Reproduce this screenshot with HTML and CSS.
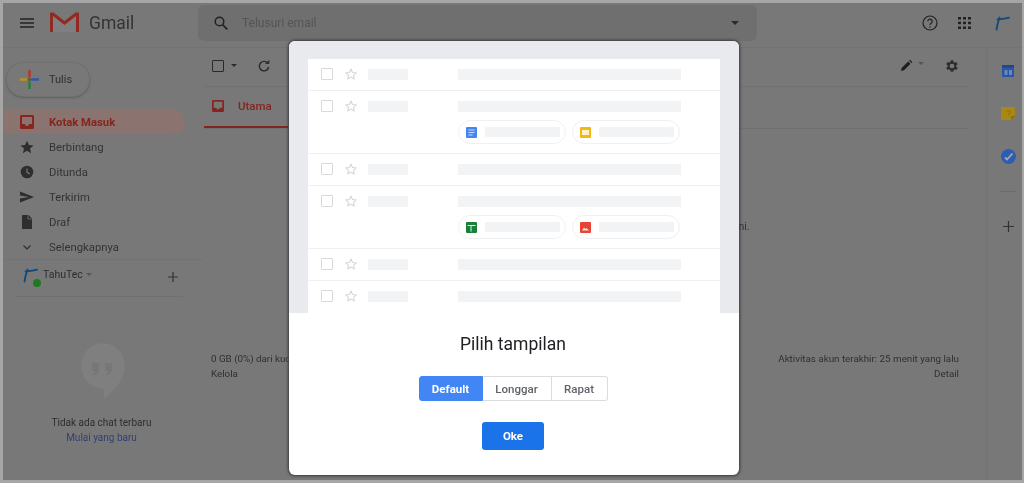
FILE: index.html
```html
<!DOCTYPE html>
<html lang="id">
<head>
<meta charset="utf-8">
<title>Gmail</title>
<link rel="stylesheet" href="styles.css">
</head>
<body>
<svg class="defs" width="0" height="0" aria-hidden="true">
  <symbol id="star" viewBox="0 0 24 24"><path d="M12 3.500l2.600 5.900 6.400.6-4.800 4.300 1.400 6.300L12 17.400l-5.600 3.200 1.400-6.300L3 10l6.400-.6z" fill="none" stroke="currentColor" stroke-width="1.800" stroke-linejoin="round"/></symbol>
  <symbol id="inbox" viewBox="0 0 14 14"><path fill-rule="evenodd" d="M1.500 0h11A1.500 1.500 0 0 1 14 1.500v11a1.500 1.500 0 0 1-1.500 1.500h-11A1.500 1.500 0 0 1 0 12.500v-11A1.500 1.500 0 0 1 1.500 0zM2 2v7h3a2 2 0 0 0 4 0h3V2z" fill="currentColor"/></symbol>
  <symbol id="tlogo" viewBox="0 0 16 16"><path d="M2.500 14.500C3 11 4 7 5.500 2.500M3.500 4.500C7 4.200 11 4 15 2.600" fill="none" stroke="#0f4a7c" stroke-width="1.800" stroke-linecap="round"/></symbol>
</svg>
<div class="frame">
  <header class="topbar">
    <div class="brand">
      <svg class="menu" viewBox="0 0 14 10"><path d="M0 1h14M0 5h14M0 9h14" stroke="#222" stroke-width="1.300"/></svg>
      <svg class="mlogo" viewBox="0 0 29 21"><path d="M2 3l12.500 9.500L27 3v17H2z" fill="#7f7f7f"/><path d="M1.500 20V2h1.500L14.500 11 26 2h1.500v18" fill="none" stroke="#912a22" stroke-width="3"/></svg>
      <span class="wordmark">Gmail</span>
    </div>
    <div class="search">
      <svg class="search-icon" viewBox="0 0 14 14"><circle cx="5.500" cy="5.500" r="4.300" fill="none" stroke="#222" stroke-width="1.500"/><path d="M8.800 8.800L13.300 13.300" stroke="#222" stroke-width="1.700"/></svg>
      <span class="search-text">Telusuri email</span>
      <span class="caret search-caret"></span>
    </div>
    <div class="actions">
      <svg class="help" viewBox="0 0 16 16"><circle cx="8" cy="8" r="7" fill="none" stroke="#222" stroke-width="1.200"/><path d="M5.800 6.300a2.200 2.200 0 1 1 3.500 1.800c-.8.600-1.300 1-1.300 2" fill="none" stroke="#222" stroke-width="1.200"/><circle cx="8" cy="12" r=".8" fill="#222"/></svg>
      <svg class="apps" viewBox="0 0 13 12"><g fill="#222"><rect x="0" width="3" height="2.500"/><rect x="5" width="3" height="2.500"/><rect x="10" width="3" height="2.500"/><rect x="0" y="4.700" width="3" height="2.500"/><rect x="5" y="4.700" width="3" height="2.500"/><rect x="10" y="4.700" width="3" height="2.500"/><rect x="0" y="9.500" width="3" height="2.500"/><rect x="5" y="9.500" width="3" height="2.500"/><rect x="10" y="9.500" width="3" height="2.500"/></g></svg>
      <svg class="top-t"><use href="#tlogo"/></svg>
    </div>
  </header>

  <div class="main">
    <aside class="sidebar">
      <button class="compose" type="button">
        <svg class="plus-color" viewBox="0 0 20 20"><path d="M10 0v8" stroke="#b5382c" stroke-width="2.600"/><path d="M10 12v8" stroke="#2a7d3c" stroke-width="2.600"/><path d="M0 10h8" stroke="#b89222" stroke-width="2.600"/><path d="M12 10h8" stroke="#2a5aa8" stroke-width="2.600"/><path d="M8 10h4" stroke="#5a5a40" stroke-width="2.600"/></svg>
        <span>Tulis</span>
      </button>
      <nav class="nav">
        <a class="nav-item active"><svg class="nav-icon"><use href="#inbox"/></svg>Kotak Masuk</a>
        <a class="nav-item"><svg class="nav-icon" viewBox="0 0 14 14"><path d="M7 .8l1.900 4.300 4.700.4-3.600 3.100 1.100 4.600L7 10.800l-4.100 2.400L4 8.600.4 5.500l4.700-.4z" fill="#2e2e2e"/></svg>Berbintang</a>
        <a class="nav-item"><svg class="nav-icon" viewBox="0 0 14 14"><circle cx="7" cy="7" r="6.300" fill="#2e2e2e"/><path d="M7 3.500V7.300l2.800 1.600" fill="none" stroke="#787878" stroke-width="1.200"/></svg>Ditunda</a>
        <a class="nav-item"><svg class="nav-icon" viewBox="0 0 14 14"><path d="M0 1.500L14 7 0 12.500V8.500L9 7 0 5.500z" fill="#2e2e2e"/></svg>Terkirim</a>
        <a class="nav-item"><svg class="nav-icon" viewBox="0 0 14 14"><path d="M2 0h6.500L12 3.500V14H2z" fill="#2e2e2e"/><path d="M8 .5V4h3.500" fill="none" stroke="#787878" stroke-width=".8"/></svg>Draf</a>
        <a class="nav-item"><svg class="nav-icon" viewBox="0 0 14 14"><path d="M3.500 5.500L7 9l3.500-3.500" fill="none" stroke="#2e2e2e" stroke-width="1.200"/></svg>Selengkapnya</a>
      </nav>
      <div class="account">
        <span class="avatar"><svg class="avatar-t"><use href="#tlogo"/></svg><i class="dot"></i></span>
        <span class="account-name">TahuTec</span>
        <span class="caret account-caret"></span>
        <svg class="account-plus" viewBox="0 0 10 10"><path d="M5 0v10M0 5h10" stroke="#333" stroke-width="1.200"/></svg>
      </div>
      <div class="hangouts">
        <svg class="bubble" viewBox="0 0 46 57"><path d="M23 0a23 23 0 0 1 23 23c0 13-11 25-21 33v-10.100A23 23 0 0 1 23 0z" fill="#7f7f7f"/><path d="M13 20h7v8l-3 4h-3l2-4h-3zM26 20h7v8l-3 4h-3l2-4h-3z" fill="#777"/></svg>
        <p class="hang-line">Tidak ada chat terbaru</p>
        <a class="hang-link">Mulai yang baru</a>
      </div>
    </aside>

    <section class="content">
      <div class="toolbar">
        <span class="tool-check"></span>
        <span class="caret tool-caret"></span>
        <svg class="refresh" viewBox="0 0 12 12"><path d="M10 3.500A4.700 4.700 0 1 0 10.700 7" fill="none" stroke="#2a2a2a" stroke-width="1.400"/><path d="M7 3.800h4.300V0z" fill="#2a2a2a"/></svg>
        <span class="tool-right">
          <svg class="pencil" viewBox="0 0 14 14"><path d="M1 13l.8-3.300 7-7 2.500 2.500-7 7zM9.800 1.700l1-1 2.500 2.500-1 1z" fill="#1e1e1e"/></svg>
          <span class="caret pencil-caret"></span>
          <svg class="gear" viewBox="0 0 24 24"><path d="M19.400 13a7.500 7.500 0 0 0 0-2l2.100-1.600-2-3.500-2.500 1a7.500 7.500 0 0 0-1.700-1L15 3.200h-4l-.4 2.700a7.500 7.500 0 0 0-1.700 1l-2.500-1-2 3.500L6.500 11a7.500 7.500 0 0 0 0 2l-2.100 1.600 2 3.500 2.500-1a7.500 7.500 0 0 0 1.700 1l.4 2.700h4l.4-2.700a7.500 7.500 0 0 0 1.700-1l2.500 1 2-3.500zM13 15.500a3.500 3.500 0 1 1 0-7 3.500 3.500 0 0 1 0 7z" fill="#2e2e2e" fill-rule="evenodd" transform="translate(-1 0)"/></svg>
        </span>
      </div>
      <div class="tabs">
        <a class="tab"><svg class="tab-icon"><use href="#inbox"/></svg>Utama</a>
      </div>
      <p class="empty">Email pribadi dan email yang tidak muncul di tab lain ditampilkan di sini.</p>
      <div class="foot">
        <div>0 GB (0%) dari kuota 15 GB<br>Kelola</div>
        <div class="foot-right">Aktivitas akun terakhir: 25 menit yang lalu<br>Detail</div>
      </div>
    </section>

    <aside class="addons">
      <svg class="addon-cal" viewBox="0 0 12 12"><rect width="12" height="12" fill="#2b55a6"/><rect width="12" height="2.500" fill="#23468a"/><path d="M2.500 5h3v5h-3zM7 5h3v5H7z" fill="#6f87b8"/></svg>
      <svg class="addon-note" viewBox="0 0 14 13"><path d="M0 0h14v9l-4 4H0z" fill="#a98710"/><path d="M10 13V9h4z" fill="#8a6e0e"/><path d="M5 4h4v3H7.500v1.500" fill="none" stroke="#8f7516" stroke-width="1"/></svg>
      <svg class="addon-task" viewBox="0 0 15 15"><circle cx="7.500" cy="7.500" r="7.500" fill="#2b5db3"/><path d="M4 8.500l2 2 5.500-6" fill="none" stroke="#a9a9a9" stroke-width="1.800"/></svg>
      <span class="addon-line"></span>
      <svg class="addon-plus" viewBox="0 0 11 11"><path d="M5.500 0v11M0 5.500h11" stroke="#333" stroke-width="1.200"/></svg>
    </aside>
  </div>

  <div class="modal">
    <div class="preview">
      <div class="list">
        <div class="row"><div class="line"><span class="box"></span><svg class="pstar"><use href="#star"/></svg><span class="bar sender"></span><span class="bar subject"></span></div></div>
        <div class="row tall">
          <div class="line"><span class="box"></span><svg class="pstar"><use href="#star"/></svg><span class="bar sender"></span><span class="bar subject"></span></div>
          <div class="chips">
            <div class="chip"><svg class="chip-icon" viewBox="0 0 11 11"><rect width="11" height="11" rx="1" fill="#4285f4"/><path d="M2.500 3h6M2.500 5.500h6M2.500 8h4" stroke="#dbe7fb" stroke-width=".9"/></svg><span class="bar chip-bar"></span></div>
            <div class="chip"><svg class="chip-icon" viewBox="0 0 11 11"><rect width="11" height="11" rx="1" fill="#f4b90f"/><rect x="2" y="3" width="7" height="5" fill="#fdf3cf"/></svg><span class="bar chip-bar"></span></div>
          </div>
        </div>
        <div class="row"><div class="line"><span class="box"></span><svg class="pstar"><use href="#star"/></svg><span class="bar sender"></span><span class="bar subject"></span></div></div>
        <div class="row tall">
          <div class="line"><span class="box"></span><svg class="pstar"><use href="#star"/></svg><span class="bar sender"></span><span class="bar subject"></span></div>
          <div class="chips">
            <div class="chip"><svg class="chip-icon" viewBox="0 0 11 11"><rect width="11" height="11" rx="1" fill="#188038"/><path d="M1.500 3.500h8M5 3.500V9.500" stroke="#e3f1e7" stroke-width="1"/></svg><span class="bar chip-bar"></span></div>
            <div class="chip"><svg class="chip-icon" viewBox="0 0 11 11"><rect width="11" height="11" rx="1" fill="#ea4335"/><path d="M2 8.500l2-3 1.500 1.500 1-1 2.500 2.500z" fill="#fbe0dd"/></svg><span class="bar chip-bar"></span></div>
          </div>
        </div>
        <div class="row"><div class="line"><span class="box"></span><svg class="pstar"><use href="#star"/></svg><span class="bar sender"></span><span class="bar subject"></span></div></div>
        <div class="row last"><div class="line"><span class="box"></span><svg class="pstar"><use href="#star"/></svg><span class="bar sender"></span><span class="bar subject"></span></div></div>
      </div>
    </div>
    <div class="picker">
      <h1 class="title">Pilih tampilan</h1>
      <div class="segments">
        <button class="seg seg-on" type="button">Default</button>
        <button class="seg seg-mid" type="button">Longgar</button>
        <button class="seg seg-end" type="button">Rapat</button>
      </div>
      <button class="ok" type="button">Oke</button>
    </div>
  </div>
</div>
</body>
</html>
```
FILE: styles.css
```css
* { box-sizing: border-box; }
html, body { margin: 0; padding: 0; }
body { width: 1024px; height: 483px; overflow: hidden; font-family: Roboto, "Liberation Sans", sans-serif; }
.defs { position: absolute; }
p, h1 { margin: 0; }
svg { display: block; flex: none; }

.frame { position: relative; width: 1024px; height: 483px; border: 3px solid #a6a6a6; border-width: 3px 2px 3px 3px; background: #787878; color: #333; overflow: hidden; display: flex; flex-direction: column; filter: blur(.4px); }

.topbar { flex: none; height: 45px; padding-bottom: 5px; display: flex; align-items: center; border-bottom: 1px solid #737373; }
.brand { width: 195px; display: flex; align-items: center; }
.menu { width: 14px; height: 10px; margin-left: 17px; }
.mlogo { width: 29px; height: 21px; margin-left: 16px; }
.wordmark { margin-left: 10px; font-size: 17.500px; color: #333; }
.search { width: 559px; height: 36px; background: #6f6f6f; border-radius: 6px; display: flex; align-items: center; }
.search-icon { width: 14px; height: 14px; margin-left: 16px; }
.search-text { margin: 1px 0 0 14px; font-size: 12px; color: #555; }
.caret { display: block; flex: none; width: 0; height: 0; border: 3px solid transparent; border-top: 3.500px solid #2a2a2a; border-bottom: 0; }
.search-caret { margin-left: auto; margin-right: 18px; border-width: 4px 4px 0; border-top-color: #2a2a2a; }
.actions { display: flex; align-items: center; margin-left: 165px; }
.help { width: 16px; height: 16px; }
.apps { width: 13px; height: 12px; margin-left: 20px; }
.top-t { width: 16px; height: 16px; margin-left: 23px; }

.main { flex: 1; min-height: 0; display: flex; }

.sidebar { flex: none; width: 201px; }
.compose { display: flex; align-items: center; width: 84px; height: 35px; margin: 14px 0 0 3px; padding: 0 0 0 13px; background: #787878; border: 1px solid #717171; border-radius: 18px; box-shadow: 0 1px 2px #5f5f5f; font: 400 11px Roboto, sans-serif; color: #2e2e2e; }
.plus-color { width: 19px; height: 19px; margin-right: 10px; }
.nav { margin-top: 12px; border-bottom: 1px solid #737373; }
.nav-item { display: flex; align-items: center; width: 182px; height: 25px; padding: 1px 0 0 17px; font-size: 11.300px; color: #333; border-radius: 0 13px 13px 0; }
.nav-icon { width: 14px; height: 14px; margin-right: 15px; color: #2e2e2e; }
.nav-item.active { background: #8b7370; color: #85251f; font-weight: 700; }
.nav-item.active .nav-icon { color: #85251f; }
.account { display: flex; align-items: center; width: 167px; height: 37px; margin-left: 13px; padding-bottom: 2px; border-bottom: 1px solid #707070; }
.avatar { position: relative; width: 22px; margin-left: 6px; height: 20px; }
.avatar-t { width: 16px; height: 16px; }
.dot { position: absolute; left: 11px; top: 12px; width: 8px; height: 8px; border-radius: 50%; background: #1e7a1e; }
.account-name { margin-left: -1px; margin-top: -6px; font-size: 10.500px; color: #2e2e2e; }
.account-caret { margin-left: 3px; margin-top: -6px; border-top-color: #555; }
.account-plus { width: 10px; height: 10px; margin-left: auto; margin-right: 5px; }
.hangouts { width: 197px; margin-top: 46px; display: flex; flex-direction: column; align-items: center; }
.bubble { width: 46px; height: 57px; }
.hang-line { margin-top: 15px; font-size: 10px; line-height: 15px; color: #2e2e2e; }
.hang-link { font-size: 10px; line-height: 15px; color: #333f75; }

.content { flex: 1; min-width: 0; padding-right: 18px; }
.toolbar { height: 39px; display: flex; align-items: center; border-bottom: 1px solid #707070; padding-bottom: 3px; }
.tool-check { width: 12px; height: 12px; margin-left: 8px; border: 1.500px solid #2a2a2a; border-radius: 1px; }
.tool-caret { margin-left: 7px; }
.refresh { width: 12px; height: 12px; margin-left: 21px; }
.tool-right { margin-left: auto; display: flex; align-items: center; margin-right: 8px; }
.pencil { width: 13px; height: 13px; }
.pencil-caret { margin-left: 5px; margin-top: -5px; border-top-color: #555; }
.gear { width: 16px; height: 16px; margin-left: 20px; }
.tabs { height: 42px; border-bottom: 1px solid #707070; }
.tab { display: flex; align-items: center; width: 84px; height: 41px; padding-left: 8px; padding-bottom: 2px; border-bottom: 2px solid #85251f; color: #85251f; font-size: 11.500px; font-weight: 500; }
.tab-icon { width: 12px; height: 12px; margin-right: 14px; color: #85251f; }
.empty { margin-top: 90px; padding-left: 8px; text-align: center; font-size: 10px; line-height: 15px; color: #2e2e2e; }
.foot { display: flex; justify-content: space-between; margin-top: 117px; padding: 0 9px 0 7px; font-size: 9.800px; line-height: 15px; color: #303030; }
.foot-right { text-align: right; }

.addons { flex: none; width: 36px; padding: 17px 0 0 7px; border-left: 1px solid #737373; display: flex; flex-direction: column; align-items: center; }
.addon-cal { width: 12px; height: 12px; }
.addon-note { width: 14px; height: 13px; margin-top: 30px; }
.addon-task { width: 15px; height: 15px; margin-top: 29px; }
.addon-line { width: 16px; height: 1px; margin-top: 27px; background: #6c6c6c; }
.addon-plus { width: 11px; height: 11px; margin-top: 29px; }

.modal { position: absolute; left: 286px; top: 38px; width: 450px; height: 434px; background: #fff; border-radius: 6px; overflow: hidden; box-shadow: 0 0 3px 1px #3a3a3a; display: flex; flex-direction: column; }
.preview { flex: none; height: 272px; background: #e8eaed; padding: 18px 19px 0; }
.list { background: #fff; height: 254px; }
.row { height: 32px; padding-top: 10px; border-bottom: 1px solid #eef0f1; }
.row.tall { height: 63px; }
.row.last { border-bottom: 0; }
.line { display: flex; align-items: center; height: 11px; }
.box { width: 12px; height: 12px; margin: -1px 0 0 13px; border: 1px solid #d9d9d9; border-radius: 1px; }
.pstar { width: 14px; height: 14px; margin: -1px 0 0 11px; color: #d5d5d5; }
.bar { display: block; height: 11px; background: #f1f3f4; }
.sender { width: 40px; margin-left: 10px; }
.subject { width: 223px; margin-left: 50px; }
.chips { display: flex; gap: 6px; margin: 8px 0 0 150px; }
.chip { display: flex; align-items: center; width: 108px; height: 24px; padding-left: 7px; border: 1px solid #eef0f1; border-radius: 12px; }
.chip-icon { width: 11px; height: 11px; }
.chip-bar { width: 75px; margin-left: 8px; height: 10px; }

.picker { flex: 1; padding-right: 2px; display: flex; flex-direction: column; align-items: center; }
.title { margin-top: 19px; font-size: 17.500px; line-height: 24px; font-weight: 400; color: #202124; }
.segments { display: flex; margin-top: 20px; }
.seg { height: 25px; padding: 0; font: 500 11.500px Roboto, sans-serif; background: #fff; color: #5f6368; border: 1px solid #dadce0; border-left: 0; }
.seg-on { width: 64px; background: #4285f4; border: 1px solid #4285f4; color: #fff; border-radius: 3px 0 0 3px; font-weight: 700; }
.seg-mid { width: 69px; }
.seg-end { width: 56px; border-radius: 0 3px 3px 0; }
.ok { width: 62px; height: 28px; margin-top: 21px; padding: 0; background: #1a73e8; border: 0; border-radius: 3px; color: #fff; font: 700 11.500px Roboto, sans-serif; }
```
